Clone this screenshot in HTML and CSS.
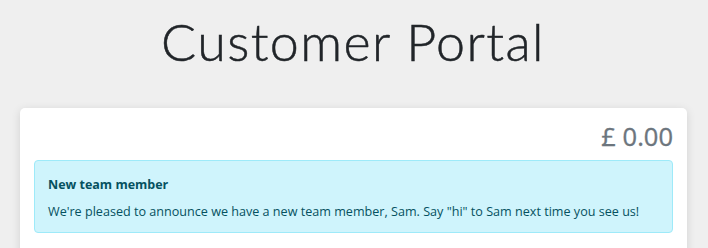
FILE: index.html
```html
<!DOCTYPE html>
<html lang="en">
<head>
<meta charset="utf-8">
<title>Customer Portal</title>
<link rel="stylesheet" href="styles.css">
</head>
<body>
<header class="page-header">
  <h1 class="title">Customer Portal</h1>
</header>
<main class="card">
  <div class="balance">£ 0.00</div>
  <div class="alert">
    <h2 class="alert-heading">New team member</h2>
    <p class="alert-text">We're pleased to announce we have a new team member, Sam. Say "hi" to Sam next time you see us!</p>
  </div>
</main>
</body>
</html>
```
FILE: styles.css
```css
html, body {
  margin: 0;
  padding: 0;
}
body {
  background: #efefef;
  font-family: "Open Sans", "Noto Sans", sans-serif;
  color: #212529;
  height: 248px;
  overflow: hidden;
}
.page-header {
  display: flex;
  justify-content: center;
  padding-top: 10px;
  height: 98px;
  box-sizing: border-box;
}
.title {
  margin: 0 0 0 -2px;
  font-family: "Lato", sans-serif;
  font-weight: 300;
  font-size: 52px;
  line-height: 62px;
  color: #212529;
  letter-spacing: 1.4px;
  -webkit-text-stroke: 0.5px #212529;
}
.card {
  margin: 10px 21px 0 20px;
  background: #fff;
  border-radius: 5px;
  box-shadow: 0 2px 10px rgba(0,0,0,0.12);
  padding: 11px 14px 20px 14px;
  height: 200px;
}
.balance {
  text-align: right;
  font-size: 25.5px;
  font-weight: 400;
  line-height: 35px;
  color: #6c757d;
  padding-right: 0;
  margin-bottom: 6px;
  -webkit-text-stroke: 0.35px #6c757d;
}
.alert {
  background: #cff4fc;
  border: 1px solid #9eeaf9;
  border-radius: 4px;
  color: #055160;
  padding: 15px 13px 10px 13px;
}
.alert-heading {
  margin: 0 0 8px 0;
  font-size: 12.5px;
  font-weight: 700;
  line-height: 18px;
}
.alert-text {
  margin: 0;
  font-size: 12.6px;
  line-height: 20px;
}
```
